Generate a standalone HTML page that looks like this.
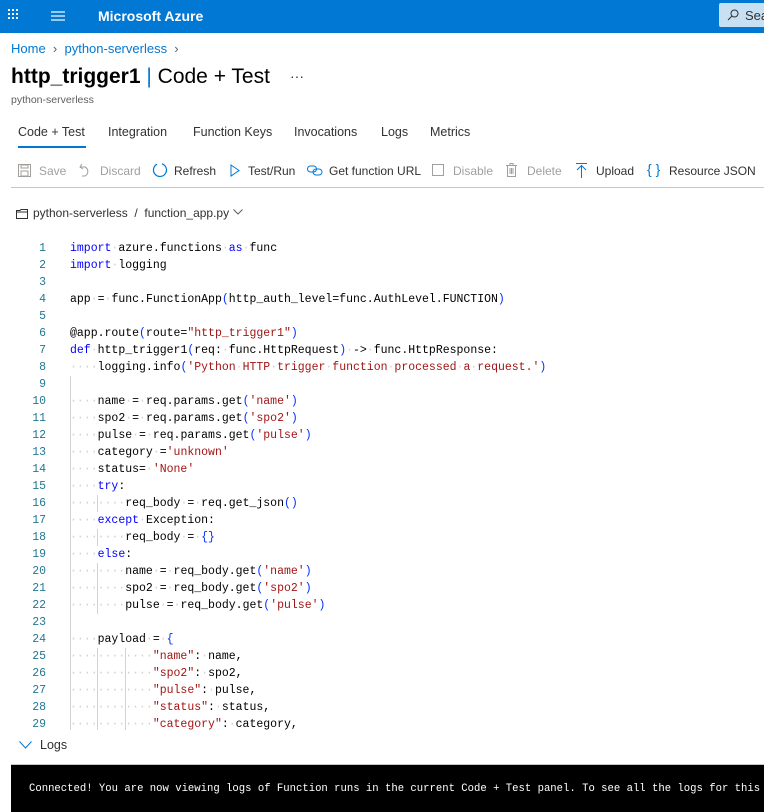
<!DOCTYPE html>
<html><head><meta charset="utf-8"><style>
*{margin:0;padding:0;box-sizing:border-box}
body{width:764px;height:812px;overflow:hidden;background:#fff;font-family:"Liberation Sans",sans-serif;color:#323130;position:relative}
.a{position:absolute;white-space:nowrap}
.top{left:0;top:0;width:764px;height:33px;background:#0078d4}
.tb{font-size:12px;top:164px}
.dis{color:#a19f9d}
.code{position:absolute;left:0;top:240px;width:764px;height:490px;overflow:hidden;font-family:"Liberation Mono",monospace;font-size:11.5px}
.ln{position:absolute;left:0;width:46px;text-align:right;color:#237893;height:17px;line-height:17px}
.cl{position:absolute;left:70px;height:17px;line-height:17px;color:#000;white-space:pre}
.k{color:#0000ff}.s{color:#a31515}.p{color:#0431fa}.d{color:#d0d0d0}
.g{position:absolute;width:1px;background:#d3d3d3}
.tab{position:absolute;top:125px;font-size:12.5px;white-space:nowrap}
</style></head><body>
<div class="a top"></div>
<svg class="a" style="left:8px;top:9px" width="12" height="12"><g fill="#fff"><rect x="0" y="0" width="2" height="2"/><rect x="4" y="0" width="2" height="2"/><rect x="8" y="0" width="2" height="2"/><rect x="0" y="4" width="2" height="2"/><rect x="4" y="4" width="2" height="2"/><rect x="8" y="4" width="2" height="2"/><rect x="0" y="8" width="2" height="2"/><rect x="4" y="8" width="2" height="2"/><rect x="8" y="8" width="2" height="2"/></g></svg>
<svg class="a" style="left:51px;top:11px" width="14" height="10"><g stroke="#fff" stroke-width="1.2"><line x1="0" y1="1" x2="14" y2="1"/><line x1="0" y1="5" x2="14" y2="5"/><line x1="0" y1="9" x2="14" y2="9"/></g></svg>
<div class="a" style="left:98px;top:8px;color:#fff;font-weight:bold;font-size:14px">Microsoft Azure</div>
<div class="a" style="left:719px;top:3px;width:50px;height:24px;background:#c7e0f4;border-radius:2px"></div>
<svg class="a" style="left:727px;top:9px" width="12" height="12"><circle cx="7.5" cy="4.5" r="3.5" fill="none" stroke="#323130" stroke-width="1"/><line x1="5" y1="7" x2="1" y2="11" stroke="#323130"/></svg>
<div class="a" style="left:745px;top:8px;font-size:13px;color:#323130">Sea</div>

<div class="a" style="left:11px;top:41px;font-size:13px;color:#0078d4">Home <span style="color:#605e5c">&nbsp;›&nbsp;</span> python-serverless <span style="color:#605e5c">&nbsp;›</span></div>
<div class="a" style="left:11px;top:65px;font-size:21px;color:#000"><b style="font-weight:600">http_trigger1</b> <span style="color:#0078d4;font-weight:300">|</span> Code + Test</div>
<div class="a" style="left:290px;top:68px;font-size:14px;color:#323130">···</div>
<div class="a" style="left:11px;top:94px;font-size:10.5px;color:#605e5c">python-serverless</div>

<div class="tab" style="left:18px">Code + Test</div>
<div class="a" style="left:18px;top:146px;width:68px;height:2px;background:#0078d4"></div>
<div class="tab" style="left:108px">Integration</div>
<div class="tab" style="left:193px">Function Keys</div>
<div class="tab" style="left:294px">Invocations</div>
<div class="tab" style="left:381px">Logs</div>
<div class="tab" style="left:430px">Metrics</div>

<svg class="a" style="left:18px;top:164px" width="13" height="13"><rect x="0.5" y="0.5" width="12" height="12" fill="none" stroke="#a19f9d"/><rect x="3" y="7" width="7" height="5" fill="none" stroke="#a19f9d"/><rect x="3" y="1" width="7" height="3" fill="none" stroke="#a19f9d"/></svg>
<div class="a tb dis" style="left:39px">Save</div>
<svg class="a" style="left:79px;top:163px" width="13" height="14"><path d="M3 1 L1 4 L4 6 M1 4 H6 A5 5 0 0 1 6 13 H3" fill="none" stroke="#a19f9d"/></svg>
<div class="a tb dis" style="left:100px">Discard</div>
<svg class="a" style="left:152px;top:162px" width="16" height="16"><path d="M10 1.8 A6.5 6.5 0 1 1 5 2.2" fill="none" stroke="#0078d4" stroke-width="1.2"/></svg>
<div class="a tb" style="left:174px">Refresh</div>
<svg class="a" style="left:230px;top:164px" width="10" height="13"><path d="M1 1 L9 6.5 L1 12 Z" fill="none" stroke="#0078d4"/></svg>
<div class="a tb" style="left:248px">Test/Run</div>
<svg class="a" style="left:307px;top:165px" width="16" height="11"><rect x="0.5" y="1" width="9" height="6" rx="3" fill="none" stroke="#0078d4"/><rect x="6" y="4" width="9" height="6" rx="3" fill="none" stroke="#0078d4"/></svg>
<div class="a tb" style="left:329px">Get function URL</div>
<div class="a" style="left:432px;top:164px;width:12px;height:12px;border:1px solid #a19f9d"></div>
<div class="a tb dis" style="left:453px">Disable</div>
<svg class="a" style="left:506px;top:163px" width="11" height="14"><path d="M0 2.5 H11 M4 2.5 V0.5 H7 V2.5 M1.5 2.5 V13.5 H9.5 V2.5 M4 5 V11 M5.5 5 V11 M7 5 V11" fill="none" stroke="#a19f9d"/></svg>
<div class="a tb dis" style="left:527px">Delete</div>
<svg class="a" style="left:576px;top:163px" width="11" height="15"><path d="M0 0.5 H11 M5.5 3 V15 M1 7 L5.5 2.5 L10 7" fill="none" stroke="#0078d4"/></svg>
<div class="a tb" style="left:596px">Upload</div>
<div class="a" style="left:647px;top:161px;font-size:14px;color:#0078d4">{ }</div>
<div class="a tb" style="left:669px">Resource JSON</div>
<div class="a" style="left:11px;top:187px;width:753px;height:1px;background:#c8c6c4"></div>

<svg class="a" style="left:16px;top:209px" width="12" height="10"><path d="M0.5 1.5 H4 L5 0.5 H11.5 V9.5 H0.5 Z M0.5 3 H11.5" fill="none" stroke="#323130"/></svg>
<div class="a" style="left:33px;top:206px;font-size:12px">python-serverless &nbsp;/ &nbsp;function_app.py</div>
<svg class="a" style="left:233px;top:209px" width="10" height="6"><path d="M0.5 0.5 L5 5 L9.5 0.5" fill="none" stroke="#605e5c"/></svg>

<div class="code">
<div class="g" style="left:70px;top:136px;height:360px"></div>
<div class="g" style="left:97px;top:255px;height:17px"></div>
<div class="g" style="left:97px;top:289px;height:17px"></div>
<div class="g" style="left:97px;top:323px;height:51px"></div>
<div class="g" style="left:97px;top:408px;height:90px"></div>
<div class="g" style="left:125px;top:408px;height:90px"></div>
<div class="ln" style="top:0">1</div><div class="cl" style="top:0"><span class="k">import</span><span class="d">·</span>azure.functions<span class="d">·</span><span class="k">as</span><span class="d">·</span>func</div>
<div class="ln" style="top:17px">2</div><div class="cl" style="top:17px"><span class="k">import</span><span class="d">·</span>logging</div>
<div class="ln" style="top:34px">3</div>
<div class="ln" style="top:51px">4</div><div class="cl" style="top:51px">app<span class="d">·</span>=<span class="d">·</span>func.FunctionApp<span class="p">(</span>http_auth_level=func.AuthLevel.FUNCTION<span class="p">)</span></div>
<div class="ln" style="top:68px">5</div>
<div class="ln" style="top:85px">6</div><div class="cl" style="top:85px">@app.route<span class="p">(</span>route=<span class="s">"http_trigger1"</span><span class="p">)</span></div>
<div class="ln" style="top:102px">7</div><div class="cl" style="top:102px"><span class="k">def</span><span class="d">·</span>http_trigger1<span class="p">(</span>req:<span class="d">·</span>func.HttpRequest<span class="p">)</span><span class="d">·</span>-&gt;<span class="d">·</span>func.HttpResponse:</div>
<div class="ln" style="top:119px">8</div><div class="cl" style="top:119px"><span class="d">····</span>logging.info<span class="p">(</span><span class="s">'Python<span class="d">·</span>HTTP<span class="d">·</span>trigger<span class="d">·</span>function<span class="d">·</span>processed<span class="d">·</span>a<span class="d">·</span>request.'</span><span class="p">)</span></div>
<div class="ln" style="top:136px">9</div>
<div class="ln" style="top:153px">10</div><div class="cl" style="top:153px"><span class="d">····</span>name<span class="d">·</span>=<span class="d">·</span>req.params.get<span class="p">(</span><span class="s">'name'</span><span class="p">)</span></div>
<div class="ln" style="top:170px">11</div><div class="cl" style="top:170px"><span class="d">····</span>spo2<span class="d">·</span>=<span class="d">·</span>req.params.get<span class="p">(</span><span class="s">'spo2'</span><span class="p">)</span></div>
<div class="ln" style="top:187px">12</div><div class="cl" style="top:187px"><span class="d">····</span>pulse<span class="d">·</span>=<span class="d">·</span>req.params.get<span class="p">(</span><span class="s">'pulse'</span><span class="p">)</span></div>
<div class="ln" style="top:204px">13</div><div class="cl" style="top:204px"><span class="d">····</span>category<span class="d">·</span>=<span class="s">'unknown'</span></div>
<div class="ln" style="top:221px">14</div><div class="cl" style="top:221px"><span class="d">····</span>status=<span class="d">·</span><span class="s">'None'</span></div>
<div class="ln" style="top:238px">15</div><div class="cl" style="top:238px"><span class="d">····</span><span class="k">try</span>:</div>
<div class="ln" style="top:255px">16</div><div class="cl" style="top:255px"><span class="d">········</span>req_body<span class="d">·</span>=<span class="d">·</span>req.get_json<span class="p">()</span></div>
<div class="ln" style="top:272px">17</div><div class="cl" style="top:272px"><span class="d">····</span><span class="k">except</span><span class="d">·</span>Exception:</div>
<div class="ln" style="top:289px">18</div><div class="cl" style="top:289px"><span class="d">········</span>req_body<span class="d">·</span>=<span class="d">·</span><span class="p">{}</span></div>
<div class="ln" style="top:306px">19</div><div class="cl" style="top:306px"><span class="d">····</span><span class="k">else</span>:</div>
<div class="ln" style="top:323px">20</div><div class="cl" style="top:323px"><span class="d">········</span>name<span class="d">·</span>=<span class="d">·</span>req_body.get<span class="p">(</span><span class="s">'name'</span><span class="p">)</span></div>
<div class="ln" style="top:340px">21</div><div class="cl" style="top:340px"><span class="d">········</span>spo2<span class="d">·</span>=<span class="d">·</span>req_body.get<span class="p">(</span><span class="s">'spo2'</span><span class="p">)</span></div>
<div class="ln" style="top:357px">22</div><div class="cl" style="top:357px"><span class="d">········</span>pulse<span class="d">·</span>=<span class="d">·</span>req_body.get<span class="p">(</span><span class="s">'pulse'</span><span class="p">)</span></div>
<div class="ln" style="top:374px">23</div>
<div class="ln" style="top:391px">24</div><div class="cl" style="top:391px"><span class="d">····</span>payload<span class="d">·</span>=<span class="d">·</span><span class="p">{</span></div>
<div class="ln" style="top:408px">25</div><div class="cl" style="top:408px"><span class="d">············</span><span class="s">"name"</span>:<span class="d">·</span>name,</div>
<div class="ln" style="top:425px">26</div><div class="cl" style="top:425px"><span class="d">············</span><span class="s">"spo2"</span>:<span class="d">·</span>spo2,</div>
<div class="ln" style="top:442px">27</div><div class="cl" style="top:442px"><span class="d">············</span><span class="s">"pulse"</span>:<span class="d">·</span>pulse,</div>
<div class="ln" style="top:459px">28</div><div class="cl" style="top:459px"><span class="d">············</span><span class="s">"status"</span>:<span class="d">·</span>status,</div>
<div class="ln" style="top:476px">29</div><div class="cl" style="top:476px"><span class="d">············</span><span class="s">"category"</span>:<span class="d">·</span>category,</div>
</div>

<svg class="a" style="left:19px;top:741px" width="13" height="8"><path d="M0.5 0.5 L6.5 7 L12.5 0.5" fill="none" stroke="#0078d4"/></svg>
<div class="a" style="left:40px;top:738px;font-size:12.5px">Logs</div>
<div class="a" style="left:11px;top:764px;width:753px;height:1px;background:#c8c6c4"></div>
<div class="a" style="left:11px;top:765px;width:753px;height:47px;background:#000;overflow:hidden">
<div class="a" style="left:18px;top:18px;font-family:'Liberation Mono',monospace;font-size:10.6px;color:#fff">Connected! You are now viewing logs of Function runs in the current Code + Test panel. To see all the logs for this</div>
</div>
</body></html>
